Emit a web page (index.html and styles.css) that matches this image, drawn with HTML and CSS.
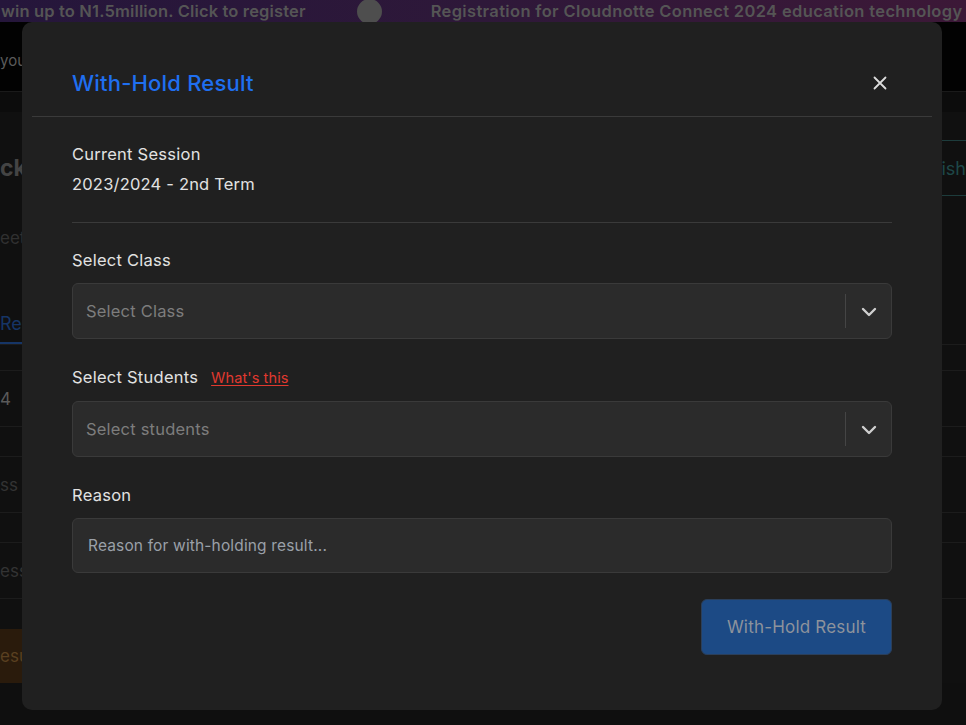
FILE: index.html
```html
<!DOCTYPE html>
<html lang="en">
<head>
<meta charset="utf-8">
<title>With-Hold Result</title>
<link rel="stylesheet" href="styles.css">
</head>
<body>
<div class="page">
  <div class="banner">
    <span class="banner-text">win up to N1.5million. Click to register</span>
    <span class="banner-dot"></span>
    <span class="banner-text wide">Registration for Cloudnotte Connect 2024 education technology</span>
  </div>
  <div class="navbar"><span class="nav-text">you</span></div>
  <div class="subbar"></div>
  <main class="content">
    <div class="head-row">
      <h1 class="page-title">ck</h1>
      <button class="publish-btn">Publish</button>
    </div>
    <p class="subtitle">eet</p>
    <div class="tabs"><span class="tab active">Results</span></div>
    <div class="table">
      <div class="row row-head"></div>
      <div class="row"><span>4</span></div>
      <div class="row row-thin"></div>
      <div class="row"><span class="dim">ss</span></div>
      <div class="row row-thin"></div>
      <div class="row"><span class="dim">ess</span></div>
    </div>
    <div class="action-row"><button class="orange-btn">esu</button></div>
  </main>
</div>

<div class="modal">
  <div class="modal-header">
    <h2 class="modal-title">With-Hold Result</h2>
    <button class="close-btn" aria-label="Close">
      <svg width="14" height="14" viewBox="0 0 14 14"><path d="M1.5 1.5 L12.5 12.5 M12.5 1.5 L1.5 12.5" stroke="#dcdcdc" stroke-width="1.8" stroke-linecap="round"/></svg>
    </button>
  </div>
  <div class="modal-body">
    <div class="session">
      <div class="label">Current Session</div>
      <div class="session-value">2023/2024 - 2nd Term</div>
    </div>
    <hr class="body-divider">
    <div class="field">
      <label class="label">Select Class</label>
      <div class="select">
        <span class="placeholder">Select Class</span>
        <span class="sep"></span>
        <span class="chev"><svg width="16" height="10" viewBox="0 0 16 10"><path d="M2 2 L8 8 L14 2" fill="none" stroke="#cfcfcf" stroke-width="2.4" stroke-linecap="round" stroke-linejoin="round"/></svg></span>
      </div>
    </div>
    <div class="field">
      <label class="label">Select Students <a class="whats" href="#">What's this</a></label>
      <div class="select">
        <span class="placeholder">Select students</span>
        <span class="sep"></span>
        <span class="chev"><svg width="16" height="10" viewBox="0 0 16 10"><path d="M2 2 L8 8 L14 2" fill="none" stroke="#cfcfcf" stroke-width="2.4" stroke-linecap="round" stroke-linejoin="round"/></svg></span>
      </div>
    </div>
    <div class="field">
      <label class="label">Reason</label>
      <div class="textarea"><span class="reason-ph">Reason for with-holding result...</span></div>
    </div>
    <div class="footer">
      <button class="submit-btn">With-Hold Result</button>
    </div>
  </div>
</div>
</body>
</html>
```

FILE: styles.css
```css
* { box-sizing: border-box; }
html, body { margin: 0; padding: 0; }
body {
  width: 966px;
  height: 725px;
  overflow: hidden;
  background: #0f0f0f;
  font-family: Inter, "Noto Sans", sans-serif;
}
.page { width: 966px; overflow: hidden; }
.banner {
  height: 22px;
  background: linear-gradient(90deg, #25163b 0%, #2e1839 50%, #3c1837 100%);
  display: flex;
  align-items: center;
  white-space: nowrap;
  overflow: hidden;
  padding-left: 1px;
}
.banner-text {
  color: #555;
  font-size: 16.5px;
  font-weight: 600;
  letter-spacing: 0.15px;
}
.banner-text.wide { letter-spacing: 0.35px; }
.banner-dot {
  width: 25px;
  height: 25px;
  border-radius: 50%;
  background: #4e4e4e;
  margin: 0 49px 0 51px;
  flex: none;
}
.navbar {
  height: 70px;
  background: #020202;
  border-bottom: 1px solid #1a1a1a;
  display: flex;
  align-items: center;
  padding-top: 8px;
}
.nav-text { color: #5a5a5a; font-size: 15px; }
.subbar { height: 20px; background: #0c0c0c; }
.content { background: #101010; }
.head-row {
  height: 84px;
  display: flex;
  align-items: flex-end;
  justify-content: space-between;
  padding-top: 28px;
  overflow: hidden;
}
.page-title {
  margin: 0;
  font-size: 23px;
  font-weight: 700;
  color: #444;
  height: 56px;
  line-height: 56px;
}
.publish-btn {
  height: 56px;
  width: 110px;
  margin-right: -12px;
  background: transparent;
  border: 1px solid #1d3c3c;
  border-radius: 4px;
  color: #1e4848;
  font-family: inherit;
  font-size: 18px;
  text-align: right;
  padding: 0 11px 0 0;
}
.subtitle {
  margin: 0;
  height: 84px;
  line-height: 84px;
  color: #303030;
  font-size: 17px;
}
.tabs {
  height: 65px;
  border-bottom: 1px solid #1c1c1c;
  display: flex;
  align-items: flex-end;
}
.tab {
  color: #163566;
  font-size: 18px;
  padding-bottom: 8px;
  border-bottom: 2px solid #163566;
  white-space: nowrap;
}
.table .row {
  height: 56px;
  border-bottom: 1px solid #1c1c1c;
  display: flex;
  align-items: center;
  color: #5a5a5a;
  font-size: 17px;
}
.table .row-head { height: 26px; }
.table .row-thin { height: 30px; }
.table .dim { color: #333; }
.action-row { padding-top: 30px; }
.orange-btn {
  height: 54px;
  width: 200px;
  background: #2a1b0c;
  border: none;
  border-radius: 0 6px 6px 0;
  color: #5a4020;
  font-family: inherit;
  font-size: 17px;
  text-align: left;
  padding: 0;
}

/* Modal */
.modal {
  position: fixed;
  top: 22px;
  left: 22px;
  width: 920px;
  height: 688px;
  background: #202020;
  border-radius: 10px;
}
.modal-header {
  height: 95px;
  margin: 0 10px;
  border-bottom: 1px solid #3a3a3a;
  display: flex;
  align-items: center;
  justify-content: space-between;
  padding: 28px 45px 0 40px;
}
.modal-title {
  margin: 0;
  font-size: 22px;
  font-weight: 500;
  color: #1f6ff0;
  letter-spacing: 0.2px;
}
.close-btn {
  background: none;
  border: none;
  padding: 0;
  width: 14px;
  height: 14px;
  display: flex;
}
.modal-body { padding: 25px 50px 0; }
.label {
  display: block;
  color: #e2e2e2;
  font-size: 16.5px;
  letter-spacing: 0.25px;
  line-height: 24px;
}
.session-value {
  color: #e2e2e2;
  font-size: 16.5px;
  letter-spacing: 0.2px;
  line-height: 24px;
  margin-top: 6px;
}
.body-divider {
  border: none;
  border-top: 1px solid #3a3a3a;
  margin: 26px 0 25px;
}
.field { margin-bottom: 26px; }
.field .label { margin-bottom: 11px; }
.whats {
  color: #e0392f;
  font-size: 14.5px;
  letter-spacing: 0.1px;
  margin-left: 8px;
  text-decoration: underline;
  text-underline-offset: 2px;
}
.select {
  height: 56px;
  background: #2b2b2b;
  border: 1px solid #3a3a3a;
  border-radius: 6px;
  display: flex;
  align-items: center;
  padding-left: 13px;
}
.placeholder {
  flex: 1;
  color: #7d7d7d;
  font-size: 16.5px;
  letter-spacing: 0.2px;
}
.sep {
  width: 1px;
  height: 34px;
  background: #454545;
}
.chev {
  width: 45px;
  display: flex;
  justify-content: center;
  padding-top: 2px;
}
.textarea {
  height: 55px;
  background: #2b2b2b;
  border: 1px solid #3a3a3a;
  border-radius: 6px;
  display: flex;
  align-items: center;
  padding-left: 15px;
}
.reason-ph {
  color: #9aa0a8;
  font-size: 15.5px;
  letter-spacing: 0.15px;
}
.footer {
  display: flex;
  justify-content: flex-end;
  margin-top: 1px;
}
.submit-btn {
  width: 191px;
  height: 56px;
  background: #1c4a85;
  border: 1px solid #2b3f5a;
  border-radius: 6px;
  color: #8d939c;
  font-family: inherit;
  font-size: 17px;
  letter-spacing: 0.2px;
}
```
